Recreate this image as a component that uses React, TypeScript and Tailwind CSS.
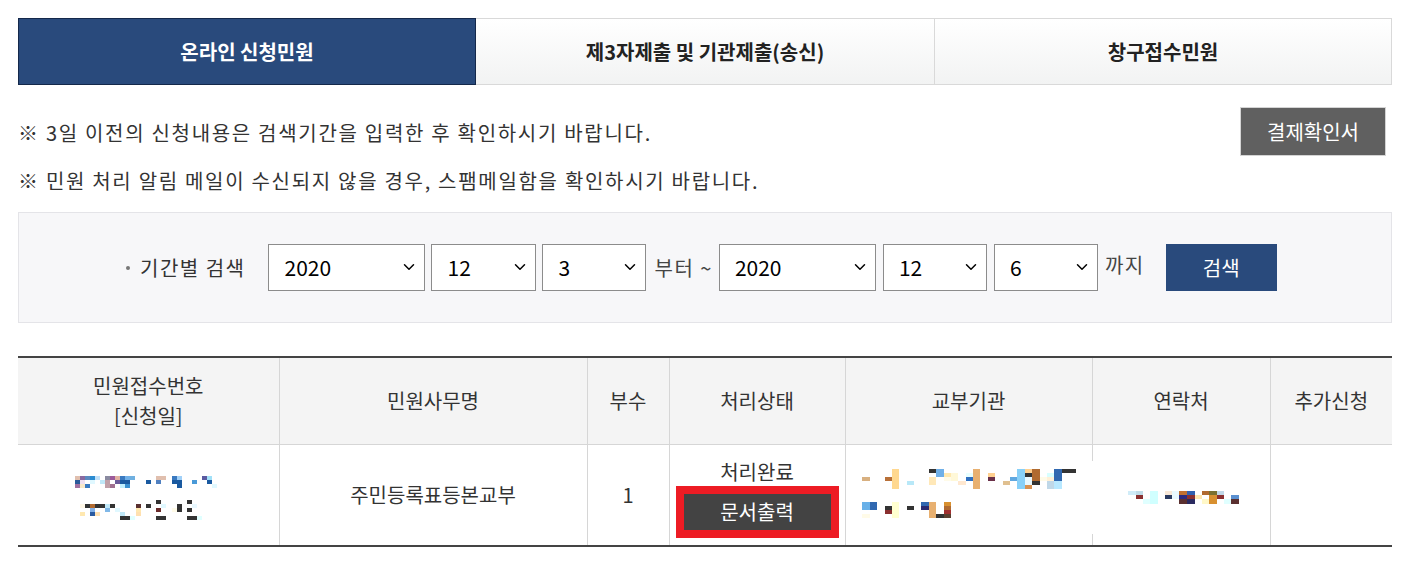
import { ChevronDown } from 'lucide-react'

type Block = [number, number, number, number, string]

// blurred (mosaic) personal data, coordinates in 1/3 px
const receiptMosaic: Block[] = [
  [45, 48, 15, 12, '#e0bfae'], [60, 48, 15, 12, '#8a6aa0'], [75, 48, 15, 12, '#5a8ac0'], [90, 48, 15, 12, '#2a8ad0'],
  [105, 48, 15, 12, '#c0e0f8'], [135, 48, 15, 12, '#8a8aa0'], [150, 48, 15, 12, '#9a5a9a'], [165, 48, 15, 12, '#e0b0a0'],
  [180, 48, 15, 12, '#3a7ac0'], [195, 48, 15, 12, '#70b0e8'], [210, 48, 15, 12, '#70b0e0'], [288, 48, 30, 12, '#e0bfae'],
  [336, 48, 15, 12, '#3a7ac0'], [351, 48, 15, 12, '#a0d0f8'], [426, 48, 15, 12, '#5a5aa0'], [441, 48, 15, 12, '#a0e0f8'],
  [45, 60, 15, 12, '#2a5a9a'], [60, 60, 15, 12, '#f0e0f0'], [90, 60, 15, 12, '#e0f8ff'], [120, 60, 15, 12, '#c0e8f8'],
  [135, 60, 15, 12, '#c0a0a8'], [165, 60, 15, 12, '#6a5a9a'], [180, 60, 30, 12, '#1a5aa0'], [258, 60, 15, 12, '#1a5aa0'],
  [288, 60, 15, 12, '#5080c0'], [336, 60, 30, 12, '#1a5aa0'], [396, 60, 15, 12, '#4a9ad8'], [441, 60, 15, 12, '#1a5aa0'],
  [45, 72, 15, 12, '#a070a0'], [60, 72, 15, 12, '#f8e8c8'], [75, 72, 15, 12, '#3a7ac0'], [135, 72, 15, 12, '#c0a0a8'],
  [150, 72, 15, 12, '#a07090'], [180, 72, 15, 12, '#c0f0ff'], [195, 72, 15, 12, '#3a90d0'], [351, 72, 15, 12, '#1a5aa0'],
  [456, 72, 15, 12, '#e0f8ff'],
  [288, 120, 15, 12, '#333333'], [381, 120, 15, 12, '#333333'],
  [60, 132, 15, 12, '#fff8e8'], [75, 132, 15, 12, '#333333'], [90, 132, 15, 12, '#b06a30'], [105, 132, 30, 12, '#333333'],
  [135, 132, 15, 12, '#c0e8f8'], [150, 132, 15, 12, '#333333'], [228, 132, 15, 12, '#5a3030'], [258, 132, 15, 12, '#333333'],
  [303, 132, 15, 12, '#e0f8ff'], [351, 132, 15, 12, '#333333'], [396, 132, 15, 12, '#e8f8ff'],
  [90, 144, 15, 12, '#80b0e8'], [135, 144, 15, 12, '#80b8e8'], [165, 144, 15, 12, '#e0f8ff'], [228, 144, 15, 12, '#ffe8b0'],
  [288, 144, 15, 12, '#6a2a2a'], [336, 144, 15, 12, '#fffbe8'], [351, 144, 15, 12, '#333333'], [381, 144, 15, 12, '#333333'],
  [60, 156, 15, 12, '#ffe8b0'], [90, 156, 15, 12, '#2a5aa0'], [105, 156, 15, 12, '#ffe0b0'], [180, 156, 15, 12, '#c0e8f8'],
  [228, 156, 15, 12, '#ffe0b0'],
  [180, 168, 30, 12, '#333333'], [210, 168, 15, 12, '#e0ffff'], [288, 168, 30, 12, '#333333'], [381, 168, 30, 12, '#333333'],
  [411, 168, 15, 12, '#e0ffff'],
]

const officeMosaic: Block[] = [
  [36, 72, 24, 12, '#d8b080'], [105, 72, 21, 12, '#b87038'], [126, 48, 21, 60, '#ffd890'], [171, 84, 21, 12, '#b8e8f8'],
  [237, 48, 21, 12, '#333333'], [258, 48, 24, 24, '#70b0e8'], [237, 72, 21, 24, '#ffe8b8'], [282, 60, 21, 12, '#ffe8b0'],
  [282, 72, 21, 12, '#fffbe8'], [303, 60, 21, 24, '#fff8d8'], [324, 84, 24, 12, '#ffe8d0'], [348, 60, 21, 12, '#e8ffff'],
  [348, 72, 21, 12, '#3070c0'], [369, 48, 21, 60, '#e8b070'], [414, 60, 21, 12, '#ffd090'], [414, 72, 21, 12, '#6a3048'],
  [459, 84, 21, 12, '#e0c090'], [480, 72, 21, 12, '#60a8e0'], [501, 48, 24, 60, '#88d0f8'], [525, 48, 21, 12, '#ffd090'],
  [525, 60, 21, 12, '#333333'], [525, 72, 21, 24, '#e8f8ff'], [525, 96, 21, 12, '#d89050'], [546, 48, 24, 36, '#b06a30'],
  [546, 84, 24, 12, '#333333'], [570, 72, 21, 12, '#fffbe8'], [591, 60, 21, 12, '#d8ffff'], [591, 72, 21, 12, '#fff0d8'],
  [591, 84, 21, 24, '#c0d8e8'], [612, 48, 24, 36, '#3068b0'], [612, 84, 24, 24, '#b8e8ff'], [636, 48, 42, 12, '#333333'],
  [36, 147, 24, 24, '#68b0e8'], [60, 147, 21, 24, '#3068b0'], [36, 183, 24, 12, '#fffbe8'], [105, 159, 21, 12, '#333333'],
  [105, 171, 21, 12, '#8a3030'], [126, 147, 21, 48, '#ffffd0'], [171, 159, 21, 12, '#333333'], [213, 147, 24, 12, '#3068b0'],
  [213, 159, 24, 12, '#2a2a70'], [237, 147, 21, 48, '#e8b070'], [258, 183, 24, 12, '#333333'], [282, 147, 21, 12, '#d89030'],
  [282, 159, 21, 12, '#b06a30'], [282, 171, 21, 12, '#a03030'], [282, 183, 21, 12, '#5a4030'],
]

const contactMosaic: Block[] = [
  [54, 48, 24, 12, '#d0ecf8'], [78, 48, 21, 12, '#c0dce8'], [78, 60, 21, 12, '#8a3030'], [99, 72, 21, 15, '#e0ffff'],
  [120, 48, 24, 39, '#d0ffff'], [165, 48, 21, 12, '#f8e8d8'], [165, 60, 21, 12, '#2a3a60'], [186, 48, 21, 24, '#e8f8ff'],
  [207, 48, 24, 12, '#c07030'], [231, 48, 24, 12, '#3060b0'], [207, 60, 24, 12, '#2a2a80'], [231, 60, 24, 12, '#8a3030'],
  [207, 72, 24, 15, '#5a3030'], [231, 72, 24, 15, '#2a2a60'], [255, 60, 21, 12, '#ffe8b0'], [276, 48, 21, 12, '#b06a30'],
  [297, 48, 24, 12, '#7a7030'], [276, 72, 21, 15, '#fff8c8'], [297, 60, 24, 27, '#d89030'], [321, 48, 21, 12, '#c0d8e8'],
  [321, 60, 21, 12, '#8a3030'], [342, 72, 21, 15, '#e0ffff'], [363, 60, 24, 12, '#5a90d0'], [363, 72, 24, 15, '#5a3030'],
]

function Mosaic({ blocks, w, h }: { blocks: Block[]; w: number; h: number }) {
  return (
    <svg width={w} height={h} viewBox={`0 0 ${w * 3} ${h * 3}`} shapeRendering="crispEdges" aria-hidden>
      {blocks.map(([x, y, bw, bh, c], i) => (
        <rect key={i} x={x} y={y} width={bw} height={bh} fill={c} />
      ))}
    </svg>
  )
}

function DateSelect({ value, width }: { value: string; width: string }) {
  return (
    <div className={`relative h-[47px] ${width}`}>
      <select
        defaultValue={value}
        className="h-full w-full appearance-none border border-[#8c8c8c] bg-white pl-[15px] text-[21px] text-black outline-none"
      >
        <option value={value}>{value}</option>
      </select>
      <ChevronDown size={18} strokeWidth={2} className="pointer-events-none absolute right-[7px] top-[14px] text-black" />
    </div>
  )
}

const headers = ['민원사무명', '부수', '처리상태', '교부기관', '연락처', '추가신청']

export default function App() {
  return (
    <div className="min-h-screen bg-white px-[18px] pt-[18px] text-[#333] font-['Noto_Sans_CJK_KR','Noto_Sans',sans-serif]">
      {/* tabs */}
      <div className="grid h-[67px] grid-cols-3">
        <div className="flex items-center justify-center border border-[#14284a] bg-[#294a7c] text-[20px] font-bold text-white">
          온라인 신청민원
        </div>
        <div className="flex items-center justify-center border-y border-[#d9d9d9] bg-gradient-to-b from-white to-[#f2f3f3] text-[20px] font-bold text-[#222]">
          제3자제출 및 기관제출(송신)
        </div>
        <div className="flex items-center justify-center border border-[#d9d9d9] bg-gradient-to-b from-white to-[#f2f3f3] text-[20px] font-bold text-[#222]">
          창구접수민원
        </div>
      </div>

      {/* notices */}
      <div className="mt-[22px] flex items-start justify-between">
        <div className="pt-[2px] text-[20px] tracking-[1.7px] text-[#333]">
          <p className="flex h-12 items-center">※ 3일 이전의 신청내용은 검색기간을 입력한 후 확인하시기 바랍니다.</p>
          <p className="flex h-12 items-center">※ 민원 처리 알림 메일이 수신되지 않을 경우, 스팸메일함을 확인하시기 바랍니다.</p>
        </div>
        <button className="mr-[6px] h-[49px] w-[146px] border border-[#d4d4d4] bg-[#606060] text-[20px] text-white">
          결제확인서
        </button>
      </div>

      {/* search */}
      <div className="mt-[7px] flex h-[111px] items-center border border-[#e4e4e8] bg-[#f7f7f9] pl-[107px]">
        <span className="mr-[10px] h-[4px] w-[4px] rounded-full bg-[#777]" />
        <span className="mr-[23px] text-[20px] tracking-[1.5px] text-[#333]">기간별 검색</span>
        <div className="flex items-center gap-[6px]">
          <DateSelect value="2020" width="w-[157px]" />
          <DateSelect value="12" width="w-[105px]" />
          <DateSelect value="3" width="w-[104px]" />
        </div>
        <span className="ml-[8px] mr-[6px] text-[20px] tracking-[1.5px] text-[#444]">부터 ~</span>
        <div className="flex items-center gap-[7px]">
          <DateSelect value="2020" width="w-[157px]" />
          <DateSelect value="12" width="w-[104px]" />
          <DateSelect value="6" width="w-[104px]" />
        </div>
        <span className="ml-[7px] mb-[6px] text-[20px] tracking-[1.5px] text-[#444]">까지</span>
        <button className="ml-[21px] h-[47px] w-[111px] bg-[#294a7c] text-[20px] text-white">검색</button>
      </div>

      {/* result table */}
      <table className="mt-[33px] w-full table-fixed border-collapse border-y-2 border-[#444] text-[20px] text-[#333]">
        <colgroup>
          <col className="w-[261px]" />
          <col className="w-[308px]" />
          <col className="w-[82px]" />
          <col className="w-[176px]" />
          <col className="w-[247px]" />
          <col className="w-[178px]" />
          <col className="w-[122px]" />
        </colgroup>
        <thead>
          <tr className="h-[87px] bg-[#f4f4f4]">
            <th className="border-b border-[#d6d6d6] font-normal leading-[30px]">
              민원접수번호
              <br />
              [신청일]
            </th>
            {headers.map((h) => (
              <th key={h} className="border-b border-l border-[#d6d6d6] font-normal">
                {h}
              </th>
            ))}
          </tr>
        </thead>
        <tbody>
          <tr className="h-[102px] text-center">
            <td>
              <div className="flex justify-start pl-[42px]">
                <Mosaic blocks={receiptMosaic} w={170} h={70} />
              </div>
            </td>
            <td className="border-l border-[#d6d6d6]">주민등록표등본교부</td>
            <td className="border-l border-[#d6d6d6]">1</td>
            <td className="border-l border-[#d6d6d6]">
              <div className="flex flex-col items-center pt-[6px]">
                <span className="leading-[28px]">처리완료</span>
                <div className="border-[8px] border-[#ed1c24]">
                  <button className="h-[36px] w-[147px] bg-[#434343] text-[20px] text-white">문서출력</button>
                </div>
              </div>
            </td>
            <td className="relative border-l border-[#d6d6d6]">
              <div className="flex justify-start pb-[8px] pl-[4px]">
                <Mosaic blocks={officeMosaic} w={240} h={75} />
              </div>
              <span className="absolute right-[-4px] top-[16px] bottom-[11px] w-[8px] bg-white" />
            </td>
            <td className="border-l border-[#d6d6d6]">
              <div className="flex justify-start pl-[17px]">
                <Mosaic blocks={contactMosaic} w={150} h={40} />
              </div>
            </td>
            <td className="border-l border-[#d6d6d6]" />
          </tr>
        </tbody>
      </table>
    </div>
  )
}
